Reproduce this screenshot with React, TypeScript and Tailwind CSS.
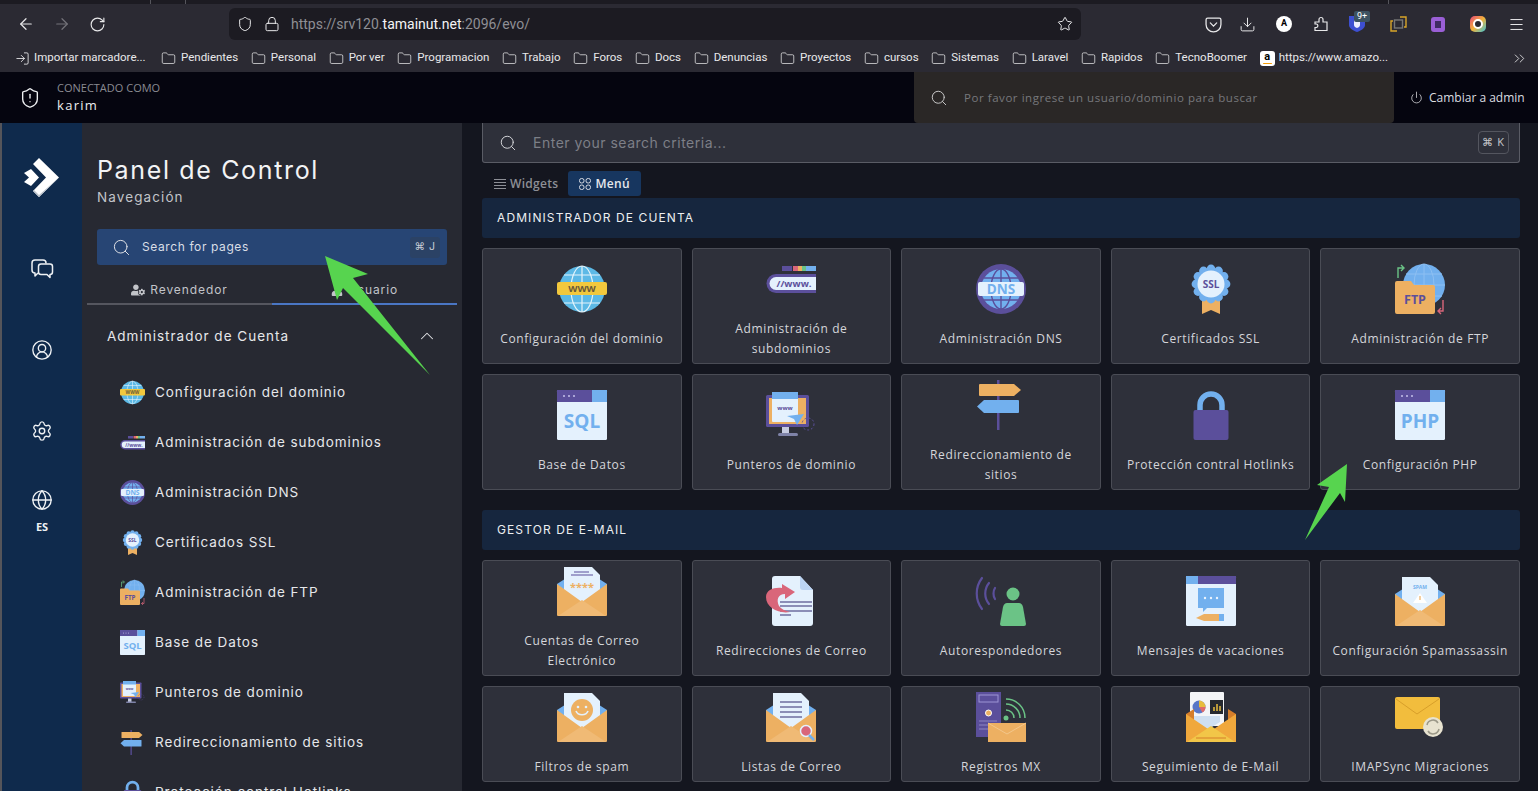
import type { ReactNode } from 'react'
import {
  ArrowLeft,
  ArrowRight,
  ChevronUp,
  ChevronsRight,
  CircleUserRound,
  Download,
  Folder,
  Globe,
  Lock,
  LogIn,
  Menu,
  Power,
  RotateCw,
  Search,
  Settings,
  Shield,
  ShieldAlert,
  Star,
} from 'lucide-react'
import { FaUser, FaUserCog } from 'react-icons/fa'

const PURPLE = '#5b4f9b'
const BLUE = '#72b0ee'
const ORANGE = '#edb062'
const LIGHT = '#e4f1fd'
const GREEN = '#6bc386'

function Pic({ size, children }: { size: number; children: ReactNode }) {
  return (
    <svg width={size} height={size} viewBox="0 0 50 50" className="shrink-0 overflow-visible">
      {children}
    </svg>
  )
}

function Label({ x, y, size, fill, children }: { x: number; y: number; size: number; fill: string; children: string }) {
  return (
    <text x={x} y={y} fontSize={size} fill={fill} fontWeight={700} textAnchor="middle" fontFamily="'Open Sans', sans-serif">
      {children}
    </text>
  )
}

function GlobeArt() {
  return (
    <>
      <circle cx="25" cy="25" r="23" fill="#5cb9e6" />
      <g fill="none" stroke="#e4f4fb" strokeWidth="1.2">
        <ellipse cx="25" cy="25" rx="11" ry="23" />
        <path d="M25 2v46M7 11h36M7 39h36" />
      </g>
      <rect x="0" y="18" width="50" height="13" rx="2" fill="#f2c83d" />
      <Label x={25} y={28} size={9.5} fill="#6a5a3a">WWW</Label>
    </>
  )
}

function SubdomainArt() {
  return (
    <>
      <rect x="16" y="12" width="10" height="5" fill={PURPLE} />
      <rect x="27" y="12" width="5" height="5" fill="#d9667a" />
      <rect x="32" y="12" width="4" height="5" fill={ORANGE} />
      <rect x="36" y="12" width="4" height="5" fill={GREEN} />
      <rect x="40" y="12" width="10" height="5" fill={BLUE} />
      <path d="M50 20H10a9.5 9.5 0 0 0 0 19h40z" fill={PURPLE} />
      <path d="M50 23H10a6.5 6.5 0 0 0 0 13h40z" fill={LIGHT} />
      <Label x={28} y={33} size={9.5} fill={PURPLE}>//www.</Label>
    </>
  )
}

function DnsArt() {
  return (
    <>
      <circle cx="25" cy="25" r="25" fill={PURPLE} />
      <circle cx="25" cy="25" r="20" fill={BLUE} />
      <g fill="none" stroke={PURPLE} strokeWidth="1.4">
        <ellipse cx="25" cy="25" rx="10" ry="20" />
        <path d="M25 5v40M8 14h34M8 36h34" />
      </g>
      <rect x="2" y="18" width="46" height="14" rx="2" fill={LIGHT} />
      <Label x={25} y={30} size={13.5} fill={BLUE}>DNS</Label>
    </>
  )
}

function SslArt() {
  const spots = Array.from({ length: 12 }, (_, i) => (i * Math.PI) / 6)
  return (
    <>
      <path d="M16 30v20l9-4 9 4V30z" fill={ORANGE} />
      <circle cx="25" cy="20" r="16" fill={BLUE} />
      {spots.map((a) => (
        <circle key={a} cx={25 + 15 * Math.cos(a)} cy={20 + 15 * Math.sin(a)} r="4.4" fill={BLUE} />
      ))}
      <circle cx="25" cy="20" r="13.5" fill={LIGHT} />
      <Label x={25} y={24} size={10} fill={PURPLE}>SSL</Label>
    </>
  )
}

function FtpArt() {
  return (
    <>
      <circle cx="29" cy="21" r="21" fill={BLUE} />
      <g fill="none" stroke="#8dbff2" strokeWidth="1">
        <ellipse cx="29" cy="21" rx="10" ry="21" />
        <path d="M29 0v42M8 21h42M11 10h36M11 32h36" />
      </g>
      <path d="M2 17h14l3 4h19a2 2 0 0 1 2 2v25a2 2 0 0 1-2 2H2a2 2 0 0 1-2-2V19a2 2 0 0 1 2-2z" fill={ORANGE} />
      <Label x={20} y={40} size={12.5} fill={PURPLE}>FTP</Label>
      <path d="M3 14V4h5M6 1l3 3-3 3" fill="none" stroke={GREEN} strokeWidth="1.4" />
      <path d="M48 36v11h-5M46 44l-3 3 3 3" fill="none" stroke="#d9667a" strokeWidth="1.4" />
    </>
  )
}

function WindowArt({ text }: { text: string }) {
  return (
    <>
      <rect width="50" height="50" rx="1.5" fill={LIGHT} />
      <rect width="35" height="12" fill={PURPLE} />
      <rect x="35" width="15" height="12" fill={BLUE} />
      <g fill="#c4c0ea">
        <circle cx="7" cy="6" r="1" />
        <circle cx="12" cy="6" r="1" />
        <circle cx="17" cy="6" r="1" />
      </g>
      <Label x={25} y={38} size={19} fill={BLUE}>{text}</Label>
    </>
  )
}

function PointerArt() {
  return (
    <>
      <rect x="0" y="5" width="43" height="32" rx="1.5" fill={PURPLE} />
      <rect x="3" y="8" width="37" height="26" fill={ORANGE} />
      <path d="M16 37h7v7h-7z" fill="#c6cbe0" />
      <rect x="12" y="43" width="20" height="3" rx="1.5" fill="#7f83a8" />
      <rect x="6" y="2" width="26" height="30" rx="1" fill={LIGHT} />
      <rect x="6" y="2" width="26" height="7" fill={BLUE} />
      <Label x={19} y={20} size={6} fill={PURPLE}>www</Label>
      <path d="M21 26l17-2-7 11-3-6z" fill={BLUE} />
      <circle cx="42" cy="34" r="6" fill="none" stroke={PURPLE} strokeWidth="1" strokeDasharray="2 2" />
    </>
  )
}

function SignArt() {
  return (
    <>
      <rect x="21" y="0" width="2.5" height="50" fill={PURPLE} />
      <path d="M4 4h34l7 6-7 6H4a1 1 0 0 1-1-1V5a1 1 0 0 1 1-1z" fill={ORANGE} />
      <path d="M8 20h34a1 1 0 0 1 1 1v11a1 1 0 0 1-1 1H8l-7-6.5z" fill={BLUE} />
    </>
  )
}

function LockArt() {
  return (
    <>
      <path d="M14 22V13a11 11 0 0 1 22 0v9" fill="none" stroke={BLUE} strokeWidth="5.5" transform="translate(0 2)" />
      <rect x="7.5" y="20" width="35" height="30" rx="2" fill={PURPLE} />
    </>
  )
}

function Envelope({ children, front = ORANGE, fold = '#f0ba75' }: { children: ReactNode; front?: string; fold?: string }) {
  return (
    <>
      <path d="M0 18L25 2l25 16v12H0z" fill={BLUE} />
      {children}
      <path d="M0 18l25 18 25-18v31a1 1 0 0 1-1 1H1a1 1 0 0 1-1-1z" fill={front} />
      <path d="M1 50l24-16 24 16z" fill={fold} />
    </>
  )
}

const letter = 'M7 1h28l8 8v20l-18 8-18-8z'

function AccountsArt() {
  return (
    <Envelope>
      <path d={letter} fill={LIGHT} />
      <path d="M14 9h22M17 6h15" stroke={PURPLE} strokeWidth="1" />
      <Label x={25} y={25} size={11} fill={ORANGE}>****</Label>
    </Envelope>
  )
}

function ForwardArt() {
  return (
    <>
      <path d="M6 3a3 3 0 0 1 3-3h25l13 14v33a3 3 0 0 1-3 3H9a3 3 0 0 1-3-3z" fill={LIGHT} />
      <path d="M34 0l13 14H37a3 3 0 0 1-3-3z" fill="#bcd5f5" />
      <path d="M14 26h32M14 30h32M14 35h32M14 39h11" stroke="#6d6ea0" strokeWidth="1.5" />
      <path d="M16 8l13 8-10 7v-5c-7 0-9 6-6 12 2 3 6 5 11 6-11 2-24-4-24-15 0-7 8-10 16-9z" fill="#d9667a" />
    </>
  )
}

function AutoArt() {
  return (
    <>
      <g fill="none" stroke={PURPLE} strokeWidth="2.2" strokeLinecap="round">
        <path d="M6 2C-1 11-1 24 6 33" />
        <path d="M13 7c-5 6-5 15 0 21" />
        <path d="M19 12c-2 3-2 8 0 11" />
      </g>
      <circle cx="37" cy="18" r="6.5" fill={GREEN} />
      <path d="M31 27h12c2 0 3 1 4 4l3 17a2 2 0 0 1-2 2H26a2 2 0 0 1-2-2l3-17c1-3 2-4 4-4z" fill={GREEN} />
    </>
  )
}

function VacationArt() {
  return (
    <>
      <rect width="50" height="50" rx="1.5" fill={LIGHT} />
      <rect width="12" height="8" fill={BLUE} />
      <rect x="12" width="38" height="8" fill={PURPLE} />
      <path d="M12 12h26v20H21l-4 4v-4h-5z" fill={BLUE} />
      <g fill="#eaf3fd">
        <circle cx="19" cy="22" r="1.2" />
        <circle cx="25" cy="22" r="1.2" />
        <circle cx="31" cy="22" r="1.2" />
      </g>
      <path d="M10 42l8-4h15v7H18z" fill={ORANGE} />
      <rect x="33" y="38" width="5" height="7" fill={BLUE} />
    </>
  )
}

function SpamArt() {
  return (
    <Envelope>
      <path d={letter} fill={LIGHT} />
      <Label x={25} y={13} size={5} fill={BLUE}>SPAM</Label>
      <path d="M25 17l7 10H18z" fill="#fff" />
      <path d="M25 20v4" stroke={ORANGE} strokeWidth="1.2" />
    </Envelope>
  )
}

function SmileArt() {
  return (
    <Envelope>
      <path d={letter} fill={LIGHT} />
      <circle cx="25" cy="18" r="11" fill={ORANGE} />
      <circle cx="21" cy="15" r="1.3" fill={LIGHT} />
      <circle cx="29" cy="15" r="1.3" fill={LIGHT} />
      <path d="M19 19c2 5 10 5 12 0" fill="none" stroke={LIGHT} strokeWidth="1.7" />
    </Envelope>
  )
}

function ListArt() {
  return (
    <>
      <Envelope>
        <path d={letter} fill={LIGHT} />
        <path d="M14 10h22M14 15h22M14 20h22M14 25h22" stroke="#6d6ea0" strokeWidth="1.3" />
      </Envelope>
      <circle cx="40" cy="39" r="5.5" fill="#d9667a" stroke={LIGHT} strokeWidth="1.5" />
      <path d="M43 43l5 5" stroke={BLUE} strokeWidth="2.5" />
    </>
  )
}

function MxArt() {
  return (
    <>
      <rect x="0" y="0" width="25" height="45" fill={PURPLE} />
      <rect x="3" y="3" width="19" height="7" fill="none" stroke="#9d95d4" strokeWidth="1" />
      <circle cx="12.5" cy="21" r="3" fill={ORANGE} stroke="#fff" strokeWidth="1" />
      <path d="M3 29h18M3 33h10M3 37h10" stroke="#8d85c4" strokeWidth="1.2" />
      <circle cx="30" cy="26" r="2.5" fill={GREEN} />
      <g fill="none" stroke={GREEN} strokeWidth="1.5">
        <path d="M30 18a8 8 0 0 1 8 8" />
        <path d="M30 12a14 14 0 0 1 14 14" />
        <path d="M30 7a19 19 0 0 1 19 19" />
      </g>
      <rect x="12" y="31" width="38" height="19" fill={ORANGE} />
      <path d="M12 31l19 11 19-11" fill="none" stroke="#f3c68a" strokeWidth="1" />
    </>
  )
}

function TrackArt() {
  return (
    <>
      <rect x="4" y="0" width="34" height="34" rx="1" fill="#f4f5f7" />
      <circle cx="13" cy="15" r="6.5" fill="#5977c7" />
      <path d="M13 15V8.500a6.500 6.500 0 0 1 6.500 6.500z" fill="#e8bd3e" />
      <path d="M13 15h6.500a6.500 6.500 0 0 1-3 5.500z" fill="#e06a6a" />
      <rect x="24" y="8" width="13" height="14" fill="#26292f" />
      <path d="M28 19v-4M31 19v-7M34 19v-5" stroke="#e8bd3e" strokeWidth="1.5" />
      <path d="M0 22l8-5v14H0zM42 17l8 5v9h-8z" fill="#d67e2a" />
      <path d="M8 24h26v6l-13 8-13-6z" fill="#cfdff0" />
      <path d="M0 22l25 17 25-17v28H0z" fill="#f0a83c" />
      <path d="M1 50l24-16 24 16z" fill="#f2c648" />
      <path d="M10 46h30" stroke="#d67e2a" strokeWidth="1" />
    </>
  )
}

function ImapArt() {
  return (
    <>
      <rect x="0" y="5" width="45" height="32" rx="2" fill="#f2bd3d" />
      <path d="M1 7l21 15L44 7" fill="none" stroke="#d89f2a" strokeWidth="1" />
      <circle cx="38" cy="35" r="10" fill="#e8e3d0" />
      <g fill="none" stroke="#9b9888" strokeWidth="1.5">
        <path d="M32 33a6 6 0 0 1 11-2" />
        <path d="M44 37a6 6 0 0 1-11 2" />
      </g>
    </>
  )
}

type Item = { name: string; art: ReactNode }

const accountItems: Item[] = [
  { name: 'Configuración del dominio', art: <GlobeArt /> },
  { name: 'Administración de subdominios', art: <SubdomainArt /> },
  { name: 'Administración DNS', art: <DnsArt /> },
  { name: 'Certificados SSL', art: <SslArt /> },
  { name: 'Administración de FTP', art: <FtpArt /> },
  { name: 'Base de Datos', art: <WindowArt text="SQL" /> },
  { name: 'Punteros de dominio', art: <PointerArt /> },
  { name: 'Redireccionamiento de sitios', art: <SignArt /> },
  { name: 'Protección contral Hotlinks', art: <LockArt /> },
  { name: 'Configuración PHP', art: <WindowArt text="PHP" /> },
]

const mailItems: Item[] = [
  { name: 'Cuentas de Correo Electrónico', art: <AccountsArt /> },
  { name: 'Redirecciones de Correo', art: <ForwardArt /> },
  { name: 'Autorespondedores', art: <AutoArt /> },
  { name: 'Mensajes de vacaciones', art: <VacationArt /> },
  { name: 'Configuración Spamassassin', art: <SpamArt /> },
  { name: 'Filtros de spam', art: <SmileArt /> },
  { name: 'Listas de Correo', art: <ListArt /> },
  { name: 'Registros MX', art: <MxArt /> },
  { name: 'Seguimiento de E-Mail', art: <TrackArt /> },
  { name: 'IMAPSync Migraciones', art: <ImapArt /> },
]

const bookmarks = [
  'Pendientes',
  'Personal',
  'Por ver',
  'Programacion',
  'Trabajo',
  'Foros',
  'Docs',
  'Denuncias',
  'Proyectos',
  'cursos',
  'Sistemas',
  'Laravel',
  'Rapidos',
  'TecnoBoomer',
]

function BrowserBar() {
  return (
    <div className="font-['Roboto',sans-serif] text-[#e8e8ea]">
      <div className="relative h-1 bg-[#1c1b22]">
        <div className="absolute left-[150px] top-0 h-1 w-px bg-[#55555c]" />
        <div className="absolute left-[185px] top-0 h-1 w-px bg-[#55555c]" />
        <div className="absolute left-[1388px] top-0 h-1 w-px bg-[#55555c]" />
      </div>
      <div className="flex h-10 items-center bg-[#2b2a33]">
        <div className="flex w-[229px] shrink-0 items-center gap-[18px] pl-[17px]">
          <ArrowLeft size={18} strokeWidth={1.6} />
          <ArrowRight size={18} strokeWidth={1.6} className="text-[#74737a]" />
          <RotateCw size={17} strokeWidth={1.6} />
        </div>
        <div className="flex h-8 w-[852px] shrink-0 items-center rounded-md bg-[#1c1b22] pl-2 pr-2">
          <Shield size={16} strokeWidth={1.5} />
          <Lock size={16} strokeWidth={1.5} className="ml-[11px]" />
          <span className="ml-[11px] text-[14px] text-[#8f8f95]">
            https://srv120.<span className="text-[#f4f4f6]">tamainut.net</span>:2096/evo/
          </span>
          <Star size={16} strokeWidth={1.5} className="ml-auto" />
        </div>
        <div className="ml-[115px] flex shrink-0 items-center">
          <div className="flex w-[34px] justify-center">
            <svg width="17" height="17" viewBox="0 0 16 16" fill="none" stroke="currentColor" strokeWidth="1.2">
              <path d="M2.500 2h11A1.500 1.500 0 0 1 15 3.500V8a7 7 0 0 1-14 0V3.500A1.500 1.500 0 0 1 2.500 2z" />
              <path d="M5 6.500L8 9.500l3-3" strokeLinecap="round" />
            </svg>
          </div>
          <div className="flex w-[34px] justify-center">
            <Download size={17} strokeWidth={1.4} />
          </div>
          <div className="flex w-10 justify-center">
            <div className="flex size-4 items-center justify-center rounded-full bg-white text-[9px] font-bold text-black">A</div>
          </div>
          <div className="flex w-[34px] justify-center">
            <svg width="16" height="16" viewBox="0 0 16 16" fill="none" stroke="currentColor" strokeWidth="1.2">
              <path d="M2 6h4V3.500a2 2 0 0 1 4 0V6h4v8.500H2v-3h1.500a1.800 1.800 0 0 0 0-3.500H2z" />
            </svg>
          </div>
          <div className="relative flex w-10 justify-center">
            <svg width="16" height="16" viewBox="0 0 16 16" className="-ml-[2px]">
              <path d="M0 0h16v9c0 3.500-4 5.500-8 7-4-1.500-8-3.500-8-7z" fill="#3d4fd1" />
              <path d="M5 4h6v5c0 1.500-1.500 2.500-3 3-1.500-.5-3-1.500-3-3z" fill="#eef" />
            </svg>
            <span className="absolute left-[16px] top-[-5px] rounded-[2px] bg-[#3c5261] px-[3px] text-[9px] leading-[11px] text-white">9+</span>
          </div>
          <div className="flex w-10 justify-center">
            <svg width="17" height="16" viewBox="0 0 17 16" fill="none" strokeWidth="1.4">
              <path d="M10 1h6v10h-2" stroke="#d9a52a" />
              <path d="M7 15H1V5h2" stroke="#d9a52a" />
              <rect x="4.500" y="4" width="8" height="8" stroke="#777" />
            </svg>
          </div>
          <div className="flex w-10 justify-center">
            <div className="flex h-[15px] w-[14px] items-center justify-center rounded-[3px] bg-[#9a5fd6]">
              <div className="h-[7px] w-1.5 bg-[#3f2a63]" />
            </div>
          </div>
          <div className="flex w-10 justify-center">
            <div className="flex size-4 items-center justify-center rounded-[5px] bg-[linear-gradient(135deg,#e8487a,#f2b33a_50%,#3ac2d9)]">
              <div className="size-2.5 rounded-full border-2 border-white bg-[#2b2a33]" />
            </div>
          </div>
          <div className="flex w-9 justify-center">
            <Menu size={17} strokeWidth={1.4} />
          </div>
        </div>
      </div>
      <div className="flex h-7 items-center bg-[#2b2a33] pl-[15px] text-[11.500px]">
        <LogIn size={15} strokeWidth={1.4} className="shrink-0" />
        <span className="ml-[4px] mr-[14px] w-[113px] shrink-0 whitespace-nowrap">Importar marcadore...</span>
        <div className="flex items-center gap-[12.700px]">
          {bookmarks.map((name) => (
            <div key={name} className="flex shrink-0 items-center gap-[5px]">
              <Folder size={15} strokeWidth={1.2} />
              <span className="whitespace-nowrap">{name}</span>
            </div>
          ))}
          <div className="flex shrink-0 items-center gap-[4px]">
            <div className="flex h-[15px] w-[15px] flex-col items-center rounded-[3px] bg-white text-[11px] font-bold leading-[12px] text-black">
              a
              <div className="h-[1.500px] w-[9px] rounded-full bg-[#f59e0b]" />
            </div>
            <span className="whitespace-nowrap">https://www.amazo...</span>
          </div>
        </div>
        <ChevronsRight size={17} strokeWidth={1.2} className="ml-auto mr-[10px] shrink-0" />
      </div>
    </div>
  )
}

function AppHeader() {
  return (
    <div className="flex h-[51px] items-stretch bg-[#05050f] font-['Open_Sans',sans-serif]">
      <div className="flex w-[914px] items-center pl-[19px]">
        <ShieldAlert size={22} strokeWidth={1.5} className="text-[#eef0f2]" />
        <div className="ml-4 pb-px">
          <div className="text-[11px] leading-4 text-[#8a8b92]">CONECTADO COMO</div>
          <div className="text-[13px] leading-[18px] tracking-[1.300px] text-[#eceef0]">karim</div>
        </div>
      </div>
      <div className="flex w-[480px] items-center rounded-b-[4px] bg-[#2a2726] pl-[16px]">
        <Search size={18} strokeWidth={1.3} className="text-[#c8c8c8]" />
        <span className="ml-[16px] text-[11.500px] tracking-[0.55px] text-[#77787c]">Por favor ingrese un usuario/dominio para buscar</span>
      </div>
      <div className="flex flex-1 items-center pl-[16px] text-[12px] text-[#dcdde0]">
        <Power size={13} strokeWidth={1.4} />
        <span className="ml-[6px] whitespace-nowrap">Cambiar a admin</span>
      </div>
    </div>
  )
}

function IconRail() {
  return (
    <div className="flex h-full w-20 shrink-0 flex-col items-center bg-[#0f2a4c] text-[#eef1f4]">
      <svg width="36" height="40" viewBox="0 0 36 40" className="mt-[35px]">
        <path d="M15 0l20 19.500L15 39l-6-6 13-13.500L9 6z" fill="#fff" />
        <path d="M0 15l7-4 8 8.500L7 28l-7-4 5-4.500z" fill="#fff" />
        <path d="M35 19.500L15 39l-6-6 1-1 5 5z" fill="#b9c0c9" />
      </svg>
      <svg width="24" height="24" viewBox="0 0 24 24" fill="none" stroke="currentColor" strokeWidth="1.5" strokeLinejoin="round" className="mt-[59px]">
        <path d="M16 6.500V6a3 3 0 0 0-3-3H5a3 3 0 0 0-3 3v7a3 3 0 0 0 3 3v3l3-3" />
        <path d="M11 7h9a2.500 2.500 0 0 1 2.500 2.500V15a2.500 2.500 0 0 1-2.500 2.500v3l-3-3h-6A2.500 2.500 0 0 1 8.500 15V9.500A2.500 2.500 0 0 1 11 7z" />
      </svg>
      <CircleUserRound size={22} strokeWidth={1.5} className="mt-[58px]" />
      <Settings size={22} strokeWidth={1.5} className="mt-[59px]" />
      <Globe size={22} strokeWidth={1.5} className="mt-[47px]" />
      <span className="mt-[8px] font-['Open_Sans',sans-serif] text-[11px] font-bold leading-4">ES</span>
    </div>
  )
}

function NavPanel() {
  return (
    <div className="h-full w-[380px] shrink-0 overflow-hidden bg-[#272932] font-['Inter',sans-serif] text-[#e6e7ea]">
      <div className="px-[15px]">
        <h1 className="mt-[31px] text-[25px] font-normal leading-8 tracking-[1.65px] text-[#f2f3f5]">Panel de Control</h1>
        <div className="mt-[2px] text-[13.500px] leading-[18px] tracking-[1.1px] text-[#c2c4c9]">Navegación</div>
        <div className="mt-[23px] flex h-9 w-[350px] items-center rounded-[3px] bg-[#274574] pl-[15px] pr-[7px]">
          <Search size={19} strokeWidth={1.2} />
          <span className="ml-[11px] text-[12px] tracking-[0.6px] text-[#d9dee6]">Search for pages</span>
          <span className="ml-auto flex h-[21px] w-[30px] items-center justify-center rounded-[3px] bg-[#2b4265] text-[10.500px] tracking-[0.5px] text-[#c9ced6]">⌘ J</span>
        </div>
      </div>
      <div className="mx-[5px] mt-[13px] grid grid-cols-2 text-[12px] tracking-[0.9px] text-[#c2c4c9]">
        <div className="flex h-[27px] items-center justify-center gap-[5px] border-b-2 border-[#55565f] pb-[2px]">
          <FaUserCog size={14} />
          Revendedor
        </div>
        <div className="flex h-[27px] items-center justify-center gap-[5px] border-b-2 border-[#4a76c4] pb-[2px]">
          <FaUser size={12} />
          Usuario
        </div>
      </div>
      <div className="flex items-center justify-between pl-[25px] pr-[24px] pt-[20px]">
        <span className="text-[13.500px] leading-5 tracking-[1px]">Administrador de Cuenta</span>
        <ChevronUp size={22} strokeWidth={1.1} />
      </div>
      <ul className="mt-[20px] pl-[38px]">
        {accountItems.map((item) => (
          <li key={item.name} className="flex h-[50px] items-center gap-2.5">
            <Pic size={25}>{item.art}</Pic>
            <span className="whitespace-nowrap text-[13.500px] tracking-[0.92px]">{item.name}</span>
          </li>
        ))}
      </ul>
    </div>
  )
}

function SectionTitle({ children, className }: { children: string; className: string }) {
  return (
    <div className={`flex h-10 items-center rounded-[3px] bg-[#16263e] pl-[15px] font-['Inter',sans-serif] text-[12px] tracking-[1.1px] text-[#eceef1] ${className}`}>
      {children}
    </div>
  )
}

function CardGrid({ items }: { items: Item[] }) {
  return (
    <div className="grid grid-cols-5 gap-x-2.5 gap-y-2.5">
      {items.map((item) => (
        <div
          key={item.name}
          className="flex flex-col items-center justify-center rounded-[3px] border border-[#4a4c55] bg-[#2e303a] px-[10.300px] py-[4.500px] text-center"
        >
          <Pic size={50}>{item.art}</Pic>
          <div className="mt-[15px] text-[12px] leading-5 tracking-[0.62px] text-[#d5d6da]">{item.name}</div>
        </div>
      ))}
    </div>
  )
}

function MainArea() {
  return (
    <div className="h-full flex-1 overflow-hidden bg-[#14161f] pl-5 pr-[18px] font-['Open_Sans',sans-serif]">
      <div className="flex h-10 items-center rounded-b-[3px] border border-t-0 border-[#5a5c65] bg-[#2e303a] pl-[16px] pr-[10px]">
        <Search size={18} strokeWidth={1.3} className="text-[#d5d6da]" />
        <span className="ml-[16px] font-['Inter',sans-serif] text-[14px] tracking-[0.5px] text-[#7d7f87]">Enter your search criteria...</span>
        <span className="ml-auto flex h-[23px] w-[31px] items-center justify-center rounded-[4px] border border-[#54565f] text-[11px] tracking-[0.5px] text-[#c8c9cd]">⌘ K</span>
      </div>
      <div className="mt-2 flex h-[25px] items-center pl-[12px] text-[12px] font-semibold tracking-[0.3px]">
        <div className="flex items-center gap-[4px] text-[#8d8f96]">
          <svg width="12" height="12" viewBox="0 0 12 12" stroke="currentColor" strokeWidth="1">
            <path d="M0 1.500h12M0 4.500h12M0 7.500h12M0 10.500h12" />
          </svg>
          Widgets
        </div>
        <div className="ml-[10px] flex h-[25px] items-center gap-[4px] rounded-[3px] bg-[#17365f] px-[11px] text-[#e6e8ec]">
          <svg width="12" height="12" viewBox="0 0 12 12" fill="none" stroke="currentColor" strokeWidth="0.9">
            <rect x="0.500" y="0.500" width="4.500" height="4.500" rx="2" />
            <rect x="7" y="0.500" width="4.500" height="4.500" rx="2" />
            <rect x="0.500" y="7" width="4.500" height="4.500" rx="2" />
            <rect x="7" y="7" width="4.500" height="4.500" rx="2" />
          </svg>
          Menú
        </div>
      </div>
      <SectionTitle className="mt-[2px] mb-2.5">ADMINISTRADOR DE CUENTA</SectionTitle>
      <CardGrid items={accountItems} />
      <SectionTitle className="mt-5 mb-2.5">GESTOR DE E-MAIL</SectionTitle>
      <CardGrid items={mailItems} />
    </div>
  )
}

export default function App() {
  return (
    <div className="relative flex h-[791px] w-full flex-col overflow-hidden bg-[#14161f]">
      <BrowserBar />
      <AppHeader />
      <div className="flex min-h-0 flex-1">
        <div className="w-0.5 shrink-0 bg-[#55555a]" />
        <IconRail />
        <NavPanel />
        <MainArea />
      </div>
      {/* arrows pasted on top of the screenshot */}
      <svg className="pointer-events-none absolute left-0 top-0" width="1538" height="791">
        <polygon points="325,256 368,274 353,278 430,375 343,288 337,300" fill="#57d44f" />
        <polygon points="1347,464 1317,485 1329,487 1305,540 1340,493 1345,502" fill="#57d44f" />
      </svg>
    </div>
  )
}
